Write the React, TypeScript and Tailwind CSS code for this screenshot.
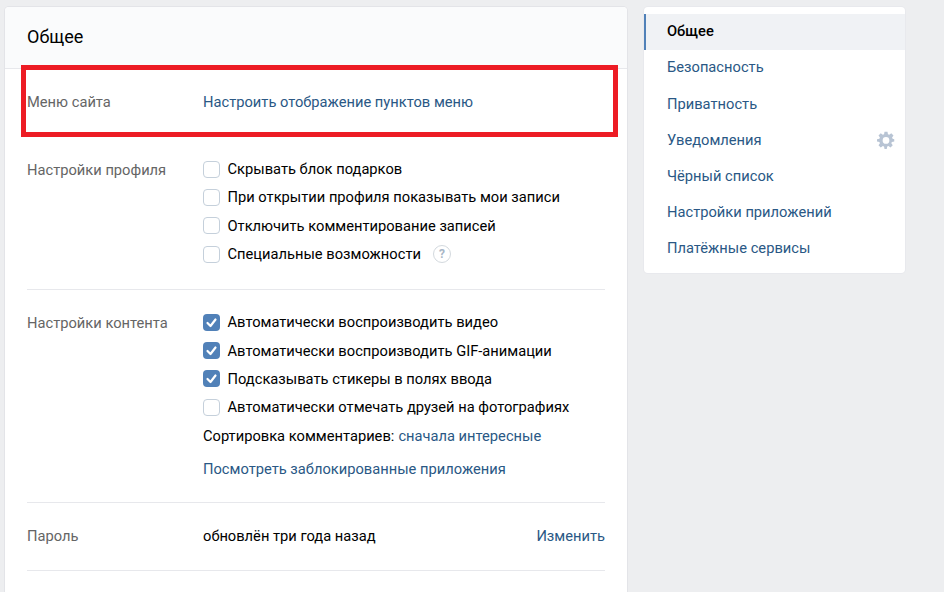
const font = { fontFamily: "Roboto, sans-serif" };

function Box({ label, checked, extra }: { label: string; checked?: boolean; extra?: boolean }) {
  return (
    <div className="flex h-[28.3px] items-center">
      {checked ? (
        <span className="flex size-[17px] items-center justify-center rounded-[4px] bg-[#5181b8]">
          <svg width="13" height="13" viewBox="0 0 13 13" fill="none" stroke="white" strokeWidth="2.2" strokeLinecap="round" strokeLinejoin="round">
            <path d="M2.5 7l3 3 5-6.5" />
          </svg>
        </span>
      ) : (
        <span className="size-[17px] rounded-[4px] border border-[#c5d0db] bg-white" />
      )}
      <span className="ml-[7.5px] text-black">{label}</span>
      {extra && (
        <span className="ml-[12px] flex size-[18px] items-center justify-center rounded-full border-[1.5px] border-[#d3d9de] text-[12px] font-bold text-[#a8b6c6]">
          ?
        </span>
      )}
    </div>
  );
}

function SideItem({ label, active, gear, lift }: { label: string; active?: boolean; gear?: boolean; lift?: boolean }) {
  if (active) {
    return (
      <div className="flex h-9 items-center border-l-2 border-[#5181b8] bg-[#f0f2f5] pb-[2px] pl-[21px] font-medium text-black">
        {label}
      </div>
    );
  }
  return (
    <div className={lift ? "flex h-9 items-center justify-between pb-[2px] pl-[23px] pr-[10px] text-[#2a5885]" : "flex h-9 items-center justify-between pl-[23px] pr-[10px] text-[#2a5885]"}>
      <span>{label}</span>
      {gear && (
        <svg width="18" height="18" viewBox="0 0 24 24" className="text-[#b8c4d4]">
          <path
            fill="currentColor"
            fillRule="evenodd"
            d="M10 1h4l.6 3.2 1.7.7L19 3l3 3-1.9 2.7.7 1.7L23 11v3l-3.2.6-.7 1.7L21 19l-3 3-2.7-1.9-1.7.7L13 24h-3l-.6-3.2-1.7-.7L5 22l-3-3 1.9-2.7-.7-1.7L0 14v-3l3.2-.6.7-1.7L2 6l3-3 2.7 1.9 1.7-.7zM12 8a4.5 4.5 0 1 0 0 9 4.5 4.5 0 0 0 0-9z"
          />
        </svg>
      )}
    </div>
  );
}

export default function App() {
  return (
    <div style={font} className="relative h-[592px] w-[944px] overflow-hidden bg-[#edeef0] text-[14.7px]">
      <div className="flex items-start pl-[5px] pt-[7px]">
        {/* Main card */}
        <div className="h-[640px] w-[622px] shrink-0 rounded-t-[4px] bg-white shadow-[0_0_0_1px_#e3e4e8]">
          <div className="flex h-[62px] items-center rounded-t-[4px] border-b border-[#e7e8ec] bg-[#fafbfc] pb-[2px] pl-[22px] text-[18px] text-black">
            Общее
          </div>

          <div className="px-[22px]">
            <div className="flex h-[67px] items-center">
              <div className="w-[176px] text-[#656565]">Меню сайта</div>
              <div className="text-[#2a5885]">Настроить отображение пунктов меню</div>
            </div>

            <div className="flex border-b border-[#e7e8ec] pb-[21px] pt-[19px]">
              <div className="w-[176px] pt-[4px] text-[#656565]">Настройки профиля</div>
              <div>
                <Box label="Скрывать блок подарков" />
                <Box label="При открытии профиля показывать мои записи" />
                <Box label="Отключить комментирование записей" />
                <Box label="Специальные возможности" extra />
              </div>
            </div>

            <div className="flex border-b border-[#e7e8ec] pb-[19px] pt-[18px]">
              <div className="w-[176px] pt-[4px] text-[#656565]">Настройки контента</div>
              <div>
                <Box label="Автоматически воспроизводить видео" checked />
                <Box label="Автоматически воспроизводить GIF-анимации" checked />
                <Box label="Подсказывать стикеры в полях ввода" checked />
                <Box label="Автоматически отмечать друзей на фотографиях" />
                <div className="mt-px flex h-[28px] items-center text-black">
                  Сортировка комментариев:<span className="ml-1 text-[#2a5885]">сначала интересные</span>
                </div>
                <div className="mt-[5px] flex h-[28px] items-center text-[#2a5885]">
                  Посмотреть заблокированные приложения
                </div>
              </div>
            </div>

            <div className="flex h-[68px] items-center border-b border-[#e7e8ec] pb-[2px]">
              <div className="w-[176px] text-[#656565]">Пароль</div>
              <div className="text-black">обновлён три года назад</div>
              <div className="ml-auto text-[#2a5885]">Изменить</div>
            </div>
          </div>
        </div>

        {/* Sidebar */}
        <div className="ml-[17px] w-[261px] shrink-0 rounded-[4px] bg-white py-[7px] shadow-[0_0_0_1px_#e8e9ed]">
          <SideItem label="Общее" active />
          <SideItem label="Безопасность" lift />
          <SideItem label="Приватность" />
          <SideItem label="Уведомления" gear />
          <SideItem label="Чёрный список" />
          <SideItem label="Настройки приложений" />
          <SideItem label="Платёжные сервисы" />
        </div>
      </div>

      {/* Red highlight drawn over the screenshot */}
      <div className="absolute left-[21px] top-[65px] h-[72px] w-[597px] border-[5px] border-[#ed1c24]" />
    </div>
  );
}
